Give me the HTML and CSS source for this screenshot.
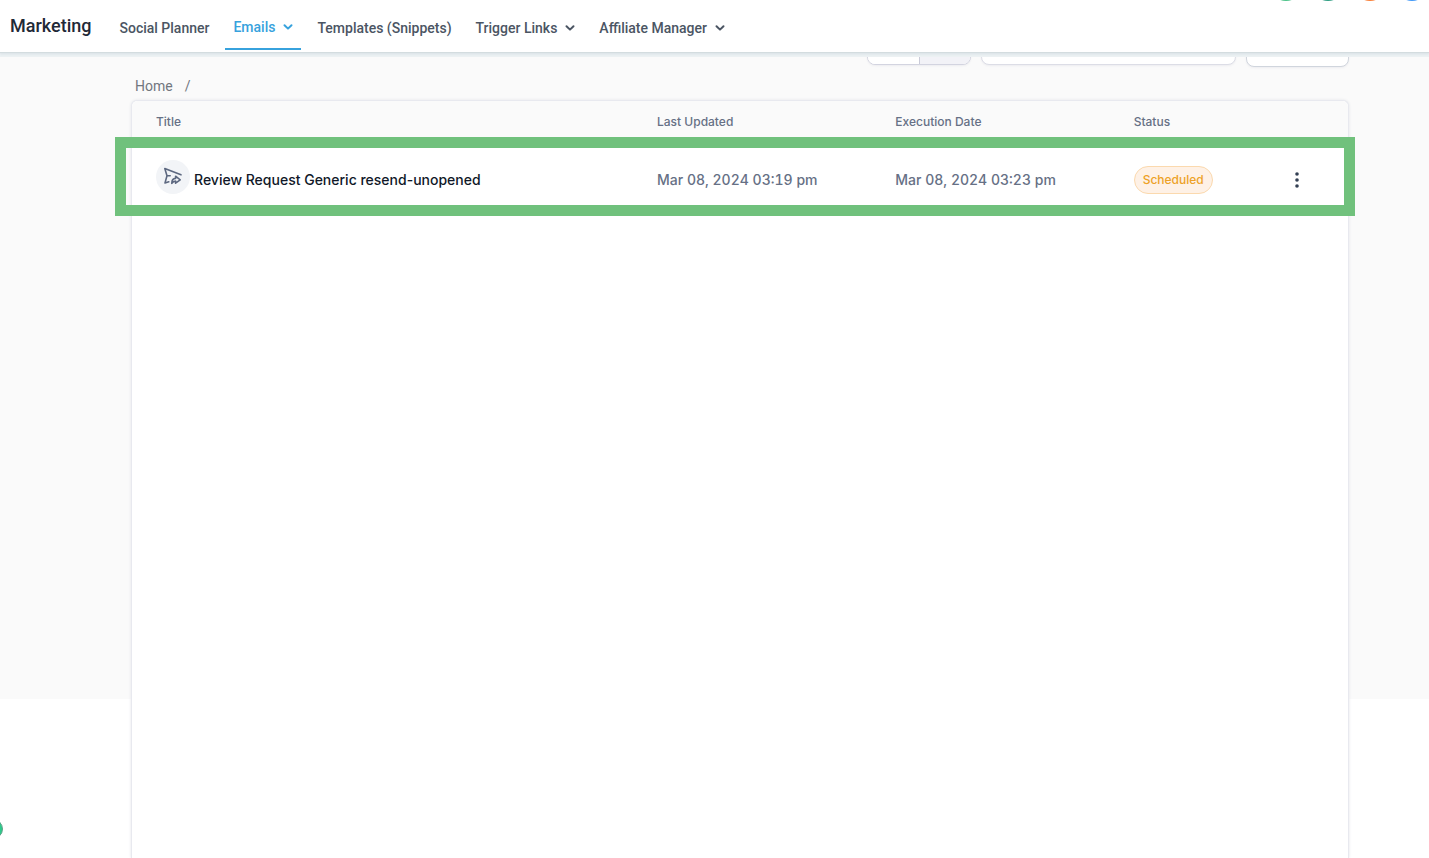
FILE: index.html
```html
<!DOCTYPE html>
<html lang="en">
<head>
<meta charset="utf-8">
<title>Marketing</title>
<link rel="stylesheet" href="styles.css">
</head>
<body>
<header class="topbar">
  <h1 class="brand">Marketing</h1>
  <nav class="nav">
    <a class="nav-item" href="#">Social Planner</a>
    <a class="nav-item active" href="#">Emails
      <svg class="chevron" viewBox="0 0 10 8"><path d="M1.5 2.2 5 5.6 8.5 2.2"/></svg></a>
    <a class="nav-item" href="#">Templates (Snippets)</a>
    <a class="nav-item" href="#">Trigger Links
      <svg class="chevron" viewBox="0 0 10 8"><path d="M1.5 2.2 5 5.6 8.5 2.2"/></svg></a>
    <a class="nav-item" href="#">Affiliate Manager
      <svg class="chevron" viewBox="0 0 10 8"><path d="M1.5 2.2 5 5.6 8.5 2.2"/></svg></a>
  </nav>
  <div class="actions">
    <button class="action green" aria-label="Phone"></button>
    <button class="action teal" aria-label="Announcements"></button>
    <button class="action orange" aria-label="Notifications"></button>
    <button class="action blue" aria-label="Help"></button>
  </div>
</header>

<main class="page">
  <div class="toolbar">
    <div class="toggle">
      <button class="toggle-option" aria-label="Grid view"></button>
      <button class="toggle-option selected" aria-label="List view"></button>
    </div>
    <input class="search" type="text" aria-label="Search">
    <button class="create" aria-label="Create"></button>
  </div>

  <nav class="breadcrumb"><a href="#">Home</a><span>/</span></nav>

  <section class="card">
    <table class="campaigns">
      <colgroup>
        <col class="col-title"><col class="col-date"><col class="col-date"><col class="col-status"><col>
      </colgroup>
      <thead>
        <tr><th>Title</th><th>Last Updated</th><th>Execution Date</th><th>Status</th><th></th></tr>
      </thead>
      <tbody>
        <tr>
          <td>
            <div class="title-cell">
              <span class="icon-circle">
                <svg class="send-icon" viewBox="0 0 20 20">
                  <path d="M18 7.8 1.8 1.6 4 8.7 2 15.9 5.8 14.7M4 8.7H7.2"/>
                  <path d="M8.8 16.4C8.8 12.8 10.2 11.5 12.6 11.4V9.2L17.2 12.8 12.6 16.2V14.1C10.7 14.1 9.7 14.8 8.8 16.4Z"/>
                </svg>
              </span>
              <span>Review Request Generic resend-unopened</span>
            </div>
          </td>
          <td class="date">Mar 08, 2024 03:19 pm</td>
          <td class="date">Mar 08, 2024 03:23 pm</td>
          <td><span class="badge">Scheduled</span></td>
          <td>
            <button class="more" aria-label="More actions">
              <svg viewBox="0 0 4 16"><circle cx="2" cy="2" r="1.8"/><circle cx="2" cy="8" r="1.8"/><circle cx="2" cy="14" r="1.8"/></svg>
            </button>
          </td>
        </tr>
      </tbody>
    </table>
    <div class="highlight"></div>
  </section>
</main>
<button class="launcher" aria-label="Open widget"></button>
</body>
</html>
```
FILE: styles.css
```css
* {
  box-sizing: border-box;
}

body {
  margin: 0;
  min-height: 100vh;
  display: flex;
  flex-direction: column;
  overflow: hidden;
  background: #fff;
  font-family: Inter, "Liberation Sans", sans-serif;
}

button {
  padding: 0;
  cursor: pointer;
}

.topbar {
  position: relative;
  z-index: 2;
  flex: none;
  display: flex;
  align-items: center;
  height: 52px;
  padding-left: 10px;
  background: #fff;
  box-shadow: 0 1px 1px #d3dcdf, 0 3px 2px #e0e8eb, 0 5px 0 #edf2f4;
  font-family: Roboto, "Liberation Sans", sans-serif;
}

.brand {
  margin: 0 20px 0 0;
  font-size: 18px;
  line-height: 52px;
  font-weight: 500;
  color: #1f2937;
}

.nav {
  display: flex;
  align-self: stretch;
}

.nav-item {
  display: flex;
  align-items: center;
  gap: 8px;
  height: 50px;
  padding: 6px 8px 0;
  margin-right: 8px;
  font-size: 14px;
  line-height: 20px;
  font-weight: 500;
  color: #4b5563;
  text-decoration: none;
}

.nav-item.active {
  border-bottom: 2px solid #37a2dd;
  color: #37a2dd;
}

.chevron {
  width: 10px;
  height: 8px;
  fill: none;
  stroke: currentColor;
  stroke-width: 2;
  stroke-linecap: round;
  stroke-linejoin: round;
}

.actions {
  position: absolute;
  right: 1px;
  bottom: 51px;
  display: flex;
  gap: 10px;
}

.action {
  width: 32px;
  height: 32px;
  border: 0;
  border-radius: 50%;
}

.green { background: #4cc38a; }
.teal { background: #2f9e83; }
.orange { background: #f9803a; }
.blue { background: #4299f7; }

.page {
  flex: 1;
  display: flex;
  flex-direction: column;
  padding: 0 80px 0 131px;
  background: linear-gradient(#fafafa 647px, #fff 647px);
}

.toolbar {
  display: flex;
  justify-content: flex-end;
  align-items: flex-start;
  gap: 10px;
  margin-top: -23px;
}

.toggle {
  display: flex;
  width: 104px;
  height: 36px;
  border: 1px solid #d3d4e0;
  border-radius: 8px;
  overflow: hidden;
  background: #fff;
  box-shadow: 0 1px 2px #ededf0;
}

.toggle-option {
  flex: 1;
  border: 0;
  background: #fff;
}

.toggle-option.selected {
  border-left: 1px solid #c9cad8;
  background: #f2f2f7;
}

.search {
  width: 255px;
  height: 36px;
  border: 1px solid #dcdde6;
  border-radius: 8px;
  background: #fff;
  box-shadow: 0 1px 2px #ededf0;
}

.create {
  width: 103px;
  height: 38px;
  border: 1px solid #d0d5dd;
  border-radius: 8px;
  background: #fff;
  box-shadow: 0 1px 2px #ededf0;
}

.breadcrumb {
  display: flex;
  gap: 12px;
  padding: 9px 4px 4px;
  font-family: Roboto, "Liberation Sans", sans-serif;
  font-size: 14px;
  line-height: 20px;
  color: #71767e;
}

.breadcrumb a {
  color: inherit;
  text-decoration: none;
}

.card {
  position: relative;
  flex: 1;
  border: 1px solid #e8e9ef;
  border-bottom: 0;
  border-radius: 6px 6px 0 0;
  background: #fff;
  box-shadow: 0 0 3px #e2e3e8;
}

.campaigns {
  width: 100%;
  table-layout: fixed;
  border-collapse: collapse;
}

.col-title { width: 41.2%; }
.col-date { width: 19.6%; }
.col-status { width: 12.6%; }

th,
td {
  padding: 0 24px;
  text-align: left;
}

th {
  height: 41px;
  background: #fafafa;
  font-size: 12px;
  line-height: 18px;
  font-weight: 500;
  color: #667085;
}

th:first-child { border-top-left-radius: 6px; }
th:last-child { border-top-right-radius: 6px; }

td {
  height: 75px;
  font-size: 14px;
  line-height: 20px;
  font-weight: 500;
  color: #101828;
  white-space: nowrap;
}

.date {
  color: #667085;
  font-variant-numeric: tabular-nums;
}

.title-cell {
  display: flex;
  align-items: center;
  gap: 4px;
}

.icon-circle {
  display: flex;
  align-items: center;
  justify-content: center;
  width: 34px;
  height: 34px;
  margin-bottom: 5px;
  border-radius: 50%;
  background: #f2f4f7;
}

.send-icon {
  width: 20px;
  height: 20px;
  fill: none;
  stroke: #5d6880;
  stroke-width: 1.6;
  stroke-linejoin: round;
  stroke-linecap: round;
}

.badge {
  display: inline-block;
  padding: 4px 8px;
  border: 1px solid #fbd9ae;
  border-radius: 14px;
  background: #fef1e6;
  font-size: 12px;
  line-height: 18px;
  color: #eda126;
}

.more {
  display: flex;
  justify-content: center;
  width: 20px;
  border: 0;
  background: none;
}

.more svg {
  width: 4px;
  height: 16px;
  fill: #344054;
}

.highlight {
  position: absolute;
  top: 36px;
  left: -17px;
  right: -7px;
  height: 79px;
  border: 11px solid #70c17c;
  pointer-events: none;
}

.launcher {
  position: fixed;
  left: -17px;
  bottom: 19px;
  width: 20px;
  height: 20px;
  border: 1px solid #5f9f86;
  border-radius: 50%;
  background: #2bcb8b;
}
```
